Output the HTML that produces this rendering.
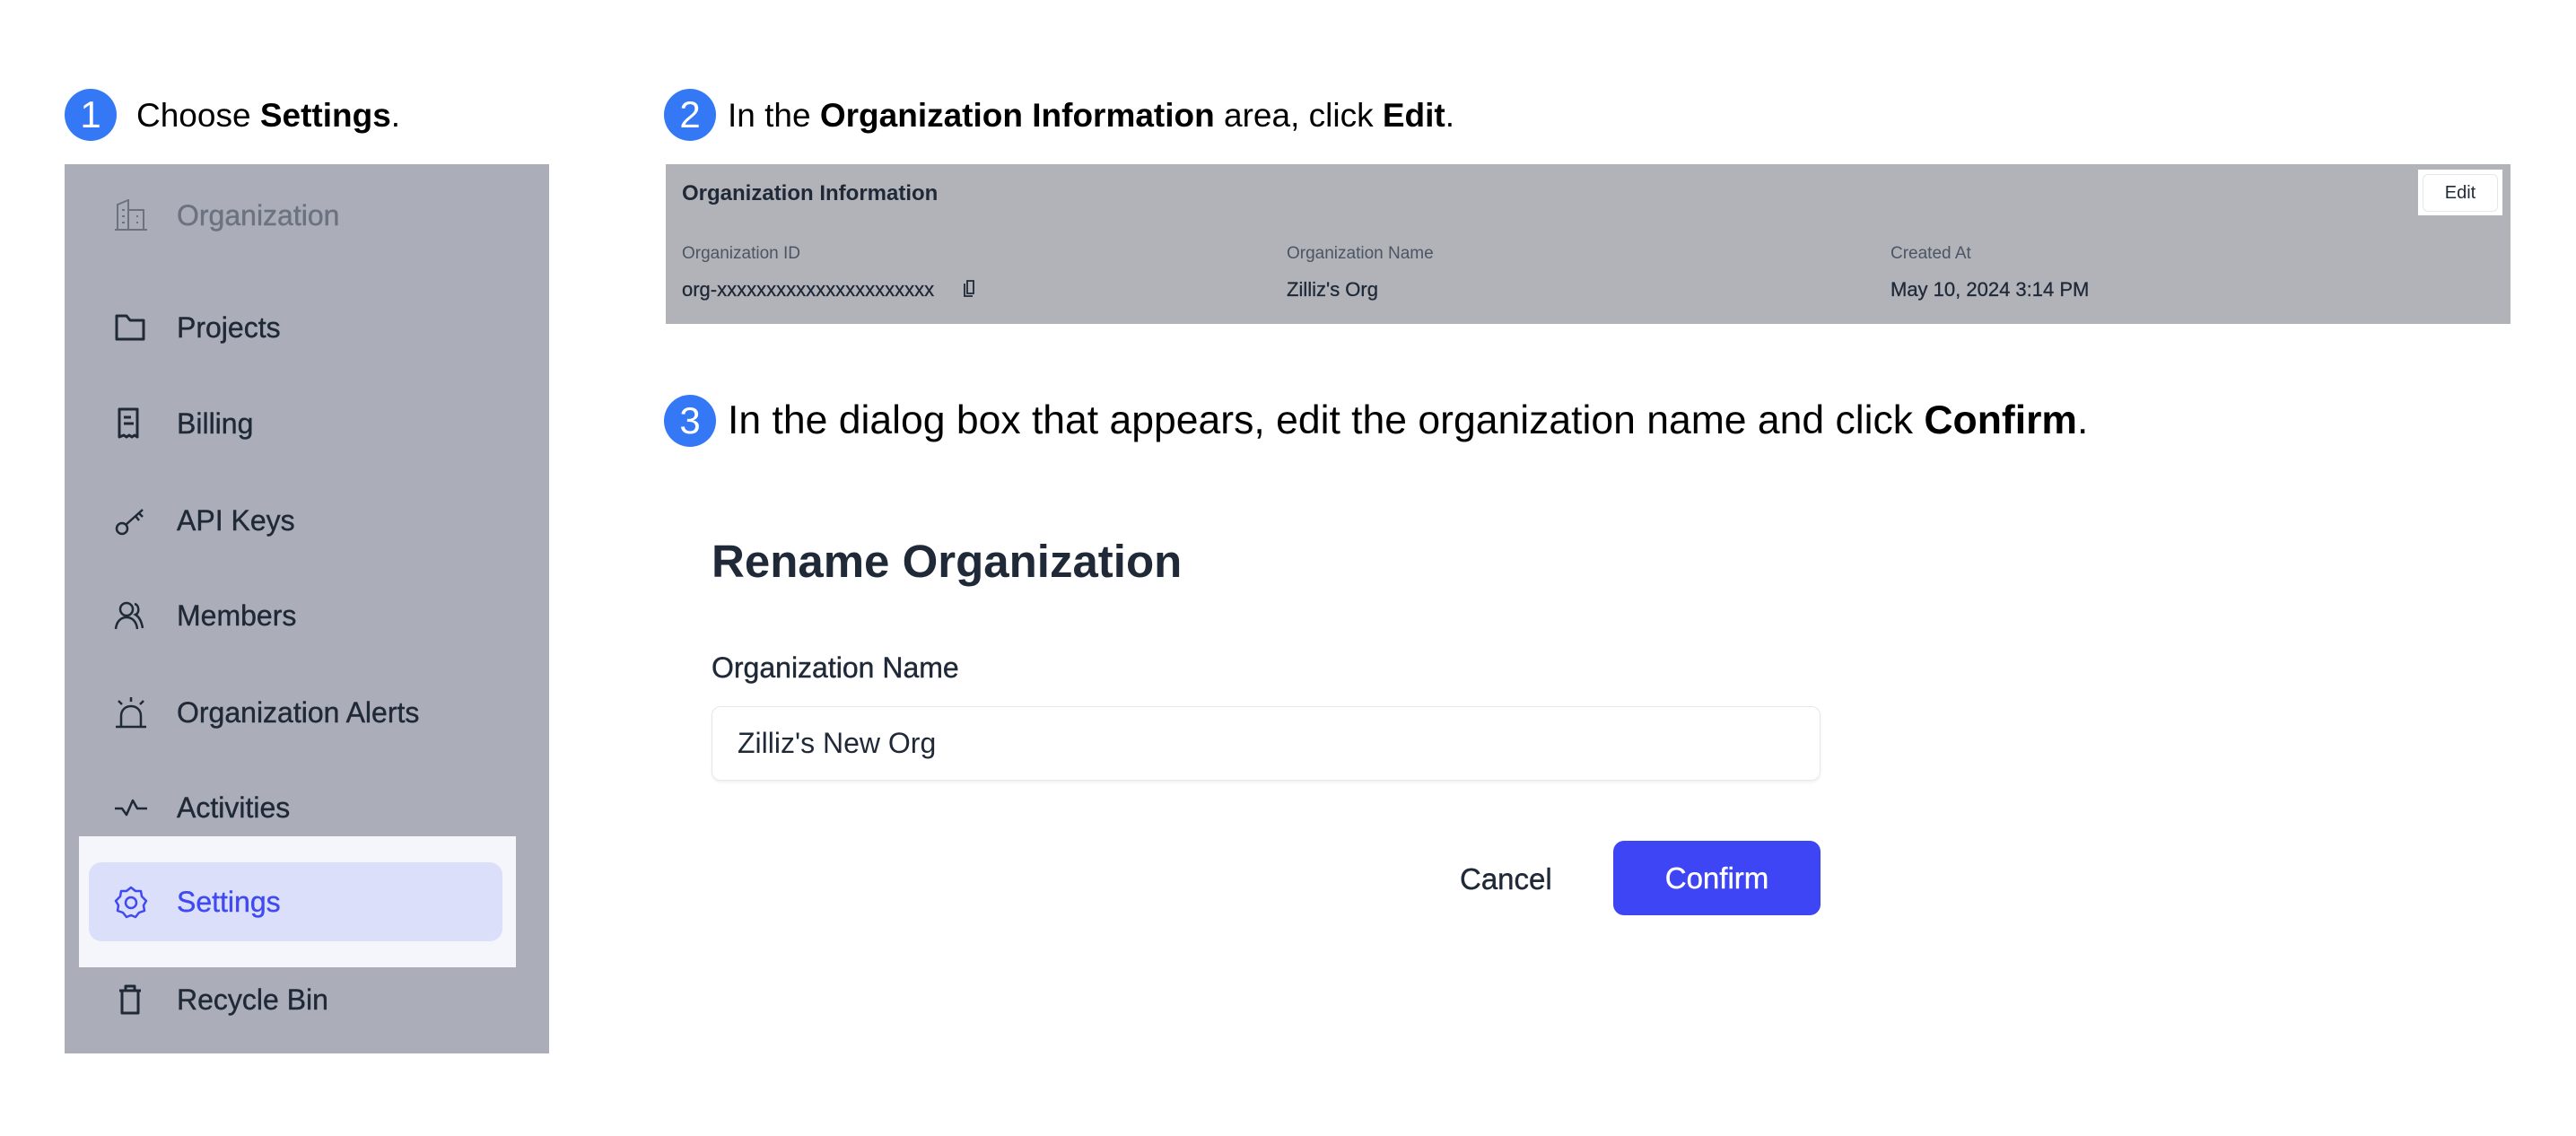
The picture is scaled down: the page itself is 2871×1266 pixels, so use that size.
<!DOCTYPE html>
<html><head><meta charset="utf-8"><style>
*{margin:0;padding:0;box-sizing:border-box}
body{width:2871px;height:1266px;background:#fff;position:relative;overflow:hidden;font-family:"Liberation Sans",Arial,sans-serif;color:#000}
.a{position:absolute;white-space:nowrap}
.num{position:absolute;width:58px;height:58px;border-radius:50%;background:#3478f6;color:#fff;font-size:42px;line-height:58px;text-align:center}
.step{font-size:37px;line-height:44px}
.side{position:absolute;left:72px;top:183px;width:540px;height:991px;background:#abaeb8}
.item{position:absolute;left:0;width:540px;height:60px;font-size:32px;color:#1f2937;font-weight:500;-webkit-text-stroke:0.4px currentColor}
.item svg{position:absolute;left:55px;top:12px}
.item span{position:absolute;left:125px;top:12px;line-height:36px}
</style></head><body>

<div class="num" style="left:72px;top:99px">1</div>
<div class="a step" style="left:152px;top:107px">Choose <b>Settings</b>.</div>

<div class="side">
 <div class="item" style="top:27px;color:#6b7280">
  <svg width="38" height="36" viewBox="0 0 38 36" fill="none" stroke="#6b7280" stroke-width="2"><path d="M1 34H37M4 34V6L16 1V34M16 12H33V34M9 12H12M9 19H12M9 26H12M25 19H27M25 26H27"/></svg>
  <span>Organization</span></div>
 <div class="item" style="top:152px">
  <svg width="38" height="36" viewBox="0 0 38 36" fill="none" stroke="#1f2937" stroke-width="3" stroke-linejoin="round"><path d="M3 5H14L18 10H33V31H3Z"/></svg>
  <span>Projects</span></div>
 <div class="item" style="top:259px">
  <svg width="38" height="36" viewBox="0 0 38 36" fill="none" stroke="#1f2937" stroke-width="3" stroke-linejoin="round"><path d="M6 2H26V33L23 31 20 33 17 31 14 33 11 31 6 33Z M11 11H19M11 18H22"/></svg>
  <span>Billing</span></div>
 <div class="item" style="top:367px">
  <svg width="38" height="36" viewBox="0 0 38 36" fill="none" stroke="#1f2937" stroke-width="2.5"><circle cx="9" cy="27" r="6"/><path d="M13 23L32 6M24 13L28 18M28 10L32 14"/></svg>
  <span>API Keys</span></div>
 <div class="item" style="top:473px">
  <svg width="38" height="36" viewBox="0 0 38 36" fill="none" stroke="#1f2937" stroke-width="2.5"><circle cx="14" cy="11" r="7"/><path d="M2 33C3 24 8 20 14 20S25 24 26 33M23 5C28 6 29 15 24 17C29 20 31 26 32 32"/></svg>
  <span>Members</span></div>
 <div class="item" style="top:581px">
  <svg width="38" height="36" viewBox="0 0 38 36" fill="none" stroke="#1f2937" stroke-width="2.5"><path d="M2 34H36M8 34V22C8 15 13 11 19 11S30 15 30 22V34M19 1V6M5 5L9 9M33 5L29 9"/></svg>
  <span>Organization Alerts</span></div>
 <div class="item" style="top:687px">
  <svg width="38" height="36" viewBox="0 0 38 36" fill="none" stroke="#1f2937" stroke-width="2.5" stroke-linejoin="round"><path d="M1 19H9L14 26L21 10L26 19H37"/></svg>
  <span>Activities</span></div>
 <div style="position:absolute;left:16px;top:749px;width:487px;height:146px;background:#f5f6fb"></div>
 <div style="position:absolute;left:27px;top:778px;width:461px;height:88px;background:#dbdffa;border-radius:14px"></div>
 <div class="item" style="top:792px;color:#3f4bf0">
  <svg width="38" height="38" viewBox="0 0 38 38" fill="none" stroke="#3f4bf0" stroke-width="2.5" stroke-linejoin="round"><path d="M19 2L24 6 30 6 31 12 36 17 33 22 34 28 28 30 24 35 19 33 14 35 10 30 4 28 5 22 2 17 7 12 8 6 14 6Z"/><circle cx="19" cy="19" r="6"/></svg>
  <span>Settings</span></div>
 <div class="item" style="top:901px">
  <svg width="38" height="36" viewBox="0 0 38 36" fill="none" stroke="#1f2937" stroke-width="3" stroke-linejoin="round"><path d="M6 8H30M13 8V3H23V8M9 8V33H27V8"/></svg>
  <span>Recycle Bin</span></div>
</div>

<div class="num" style="left:740px;top:99px">2</div>
<div class="a step" style="left:811px;top:107px">In the <b>Organization Information</b> area, click <b>Edit</b>.</div>

<div style="position:absolute;left:742px;top:183px;width:2056px;height:178px;background:#b1b3b9"></div>
<div class="a" style="left:760px;top:202px;font-size:24px;font-weight:bold;color:#1f2937">Organization Information</div>
<div style="position:absolute;left:2695px;top:189px;width:94px;height:51px;background:#fff"></div>
<div class="a" style="left:2700px;top:194px;width:84px;height:42px;border:1px solid #e5e7eb;border-radius:6px;font-size:20px;line-height:40px;text-align:center;color:#1f2937">Edit</div>
<div class="a" style="left:760px;top:272px;font-size:19px;color:#4b5563">Organization ID</div>
<div class="a" style="left:1434px;top:272px;font-size:19px;color:#4b5563">Organization Name</div>
<div class="a" style="left:2107px;top:272px;font-size:19px;color:#4b5563">Created At</div>
<div class="a" style="left:760px;top:310px;font-size:22px;color:#1f2937;-webkit-text-stroke:0.3px #1f2937">org-xxxxxxxxxxxxxxxxxxxxxx</div>
<svg class="a" style="left:1073px;top:312px" width="14" height="20" viewBox="0 0 14 20" fill="none" stroke="#1f2937" stroke-width="1.8"><path d="M2 4V18H11M5 1H12V15H5Z"/></svg>
<div class="a" style="left:1434px;top:310px;font-size:22px;color:#1f2937;-webkit-text-stroke:0.3px #1f2937">Zilliz's Org</div>
<div class="a" style="left:2107px;top:310px;font-size:22px;color:#1f2937;-webkit-text-stroke:0.3px #1f2937">May 10, 2024 3:14 PM</div>

<div class="num" style="left:740px;top:440px">3</div>
<div class="a" style="left:811px;top:443px;font-size:44.5px;line-height:52px">In the dialog box that appears, edit the organization name and click <b>Confirm</b>.</div>

<div class="a" style="left:793px;top:596px;font-size:51px;font-weight:bold;color:#1f2937">Rename Organization</div>
<div class="a" style="left:793px;top:726px;font-size:32px;color:#1f2937;-webkit-text-stroke:0.4px #1f2937">Organization Name</div>
<div class="a" style="left:793px;top:787px;width:1236px;height:83px;border:1px solid #e5e7eb;border-radius:10px;box-shadow:0 2px 3px rgba(0,0,0,.06)"></div>
<div class="a" style="left:822px;top:810px;font-size:32px;color:#1f2937">Zilliz's New Org</div>
<div class="a" style="left:1627px;top:961px;font-size:33px;color:#1f2937;-webkit-text-stroke:0.4px #1f2937">Cancel</div>
<div class="a" style="left:1798px;top:937px;width:231px;height:83px;background:#3d45f5;border-radius:12px;color:#fff;font-size:33px;line-height:83px;text-align:center;-webkit-text-stroke:0.4px #fff">Confirm</div>

</body></html>
